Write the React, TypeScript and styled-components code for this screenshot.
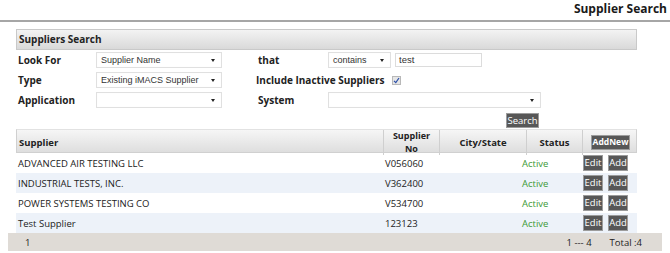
import React from "react";
import styled, { createGlobalStyle } from "styled-components";

const Global = createGlobalStyle`
  html, body { margin: 0; padding: 0; background: #fff; }
  body { font-family: "Open Sans", "DejaVu Sans", sans-serif; color: #222; }
  * { box-sizing: border-box; }
`;

const Page = styled.div`
  width: 670px;
  height: 253px;
  overflow: hidden;
`;

const TitleBar = styled.div`
  height: 22px;
  border-bottom: 2px solid #a6a6a6;
  display: flex;
  justify-content: flex-end;
  padding: 1px 3px 0 0;
`;

const Title = styled.h1`
  margin: 0;
  font-size: 12px;
  line-height: 16px;
  font-weight: 700;
  color: #1a1a1a;
`;

const Wrapper = styled.div`
  padding: 0 8px;
`;

const Content = styled.div`
  margin-left: 8px;
  width: 621px;
`;

const PanelHeader = styled.div`
  margin-top: 7px;
  height: 21px;
  border: 1px solid #c9c9c9;
  background: linear-gradient(#f3f3f3, #d9d9d9);
  font-size: 10px;
  font-weight: 700;
  line-height: 19px;
  padding-left: 2px;
`;

const Form = styled.div`
  margin-top: 2px;
  display: grid;
  grid-template-columns: 80px 126px 34px 72px auto;
  grid-auto-rows: 16px;
  row-gap: 4px;
  align-items: center;
`;

const Label = styled.span<{ $span?: number }>`
  font-size: 10px;
  font-weight: 700;
  padding-left: ${(p) => (p.$span ? 0 : 2)}px;
  white-space: nowrap;
  grid-column: span ${(p) => p.$span ?? 1};
`;

const Spacer = styled.span``;

const Select = styled.div<{ $w: number }>`
  position: relative;
  width: ${(p) => p.$w}px;
  height: 16px;
  background: #fff;
  border: 1px solid #e0e0e0;
  box-shadow: inset 0 0 1px rgba(0, 0, 0, 0.06);
  font-family: "Liberation Sans", Arial, sans-serif;
  font-size: 9px;
  line-height: 14px;
  padding-left: 4px;
  color: #333;
  white-space: nowrap;
  &::after {
    content: "";
    position: absolute;
    right: 6px;
    top: 6px;
    border-left: 2.5px solid transparent;
    border-right: 2.5px solid transparent;
    border-top: 3px solid #222;
  }
`;

const ControlRow = styled.div<{ $gap: number; $span?: number }>`
  display: flex;
  align-items: center;
  gap: ${(p) => p.$gap}px;
  white-space: nowrap;
  grid-column: span ${(p) => p.$span ?? 1};
`;

const TextInput = styled.div`
  width: 87px;
  height: 14px;
  border: 1px solid #dcdcdc;
  font-family: "Liberation Sans", Arial, sans-serif;
  font-size: 9.5px;
  line-height: 12px;
  padding-left: 3px;
  color: #333;
`;

const CheckBox = styled.span`
  display: inline-flex;
  width: 9px;
  height: 9px;
  border: 1px solid #b8b8b8;
  background: #e6e6e6;
  align-items: center;
  justify-content: center;
`;

const SearchRow = styled.div`
  display: flex;
  justify-content: flex-end;
  padding-right: 98px;
  margin-top: 5px;
  margin-bottom: 1px;
`;

const DarkButton = styled.span<{ $w: number; $bold?: boolean }>`
  display: inline-flex;
  align-items: center;
  justify-content: center;
  width: ${(p) => p.$w}px;
  height: ${(p) => (p.$w > 30 ? 15 : 16)}px;
  background: #575757;
  border: 1px solid #9c9c9c;
  color: #fff;
  font-size: ${(p) => (p.$bold ? 8.5 : 9.5)}px;
  font-weight: ${(p) => (p.$bold ? 700 : 400)};
  line-height: 1;
  white-space: nowrap;
  overflow: hidden;
`;

const HeaderRow = styled.div`
  display: grid;
  grid-template-columns: 367px 56px 87px 56px 55px;
  height: 24px;
  border: 1px solid #d0d0d0;
  border-top-color: #e2e2e2;
  background: linear-gradient(#f6f6f6, #dedede);
`;

const HeadCell = styled.div<{ $left?: boolean; $last?: boolean }>`
  display: flex;
  flex-direction: column;
  align-items: ${(p) => (p.$left ? "flex-start" : "center")};
  justify-content: center;
  text-align: center;
  padding-left: ${(p) => (p.$left ? 2 : 0)}px;
  border-right: ${(p) => (p.$last ? "none" : "1px solid #cfcfcf")};
  font-size: 9.5px;
  font-weight: 700;
  line-height: 12px;
`;

const HeadLine = styled.span`
  display: block;
  font-size: 9px;
  height: 12.5px;
  line-height: 12.5px;
  flex-shrink: 0;
`;

const BodyRow = styled.div<{ $alt: boolean }>`
  display: grid;
  grid-template-columns: 367px 56px 68px 75px 55px;
  height: 20px;
  align-items: center;
  background: ${(p) => (p.$alt ? "#edf2f9" : "#fff")};
  font-size: 9.5px;
`;

const Cell = styled.div<{ $pad: number }>`
  padding-left: ${(p) => p.$pad}px;
  white-space: nowrap;
`;

const Status = styled(Cell)`
  color: #3c9a36;
`;

const Actions = styled.div`
  display: flex;
  gap: 5px;
  padding-left: 1px;
`;

const Footer = styled.div`
  height: 18px;
  background: #dfdbd6;
  display: flex;
  align-items: center;
  justify-content: space-between;
  padding: 0 20px 0 17px;
  font-size: 9.5px;
`;

const FooterRight = styled.div`
  display: flex;
  gap: 18px;
`;

const rows = [
  { name: "ADVANCED AIR TESTING LLC", no: "V056060" },
  { name: "INDUSTRIAL TESTS, INC.", no: "V362400" },
  { name: "POWER SYSTEMS TESTING CO", no: "V534700" },
  { name: "Test Supplier", no: "123123" },
];

export default function App() {
  return (
    <Page>
      <Global />
      <TitleBar>
        <Title>Supplier Search</Title>
      </TitleBar>
      <Wrapper>
        <Content>
          <PanelHeader>Suppliers Search</PanelHeader>
          <Form>
            <Label>Look For</Label>
            <Select $w={126}>Supplier Name</Select>
            <Spacer />
            <Label>that</Label>
            <ControlRow $gap={4}>
              <Select $w={63}>contains</Select>
              <TextInput>test</TextInput>
            </ControlRow>

            <Label>Type</Label>
            <Select $w={126}>Existing iMACS Supplier</Select>
            <Spacer />
            <ControlRow $gap={8} $span={2}>
              <Label $span={1}>Include Inactive Suppliers</Label>
              <CheckBox>
                <svg width="7" height="7" viewBox="0 0 7 7">
                  <path d="M1 3.8 L2.8 5.6 L6 1" stroke="#2b4fa8" strokeWidth="1.2" fill="none" />
                </svg>
              </CheckBox>
            </ControlRow>

            <Label>Application</Label>
            <Select $w={126} />
            <Spacer />
            <Label>System</Label>
            <Select $w={213} />
          </Form>
          <SearchRow>
            <DarkButton $w={33}>Search</DarkButton>
          </SearchRow>
          <HeaderRow>
            <HeadCell $left>Supplier</HeadCell>
            <HeadCell>
              <HeadLine>Supplier</HeadLine>
              <HeadLine>No</HeadLine>
            </HeadCell>
            <HeadCell>City/State</HeadCell>
            <HeadCell>Status</HeadCell>
            <HeadCell $last>
              <DarkButton $w={39} $bold>
                AddNew
              </DarkButton>
            </HeadCell>
          </HeaderRow>
          {rows.map((r, i) => (
            <BodyRow key={r.no} $alt={i % 2 === 1}>
              <Cell $pad={2}>{r.name}</Cell>
              <Cell $pad={2}>{r.no}</Cell>
              <Cell $pad={0} />
              <Status $pad={15}>Active</Status>
              <Actions>
                <DarkButton $w={20}>Edit</DarkButton>
                <DarkButton $w={20}>Add</DarkButton>
              </Actions>
            </BodyRow>
          ))}
        </Content>
        <Footer>
          <span>1</span>
          <FooterRight>
            <span>1 --- 4</span>
            <span>Total :4</span>
          </FooterRight>
        </Footer>
      </Wrapper>
    </Page>
  );
}
